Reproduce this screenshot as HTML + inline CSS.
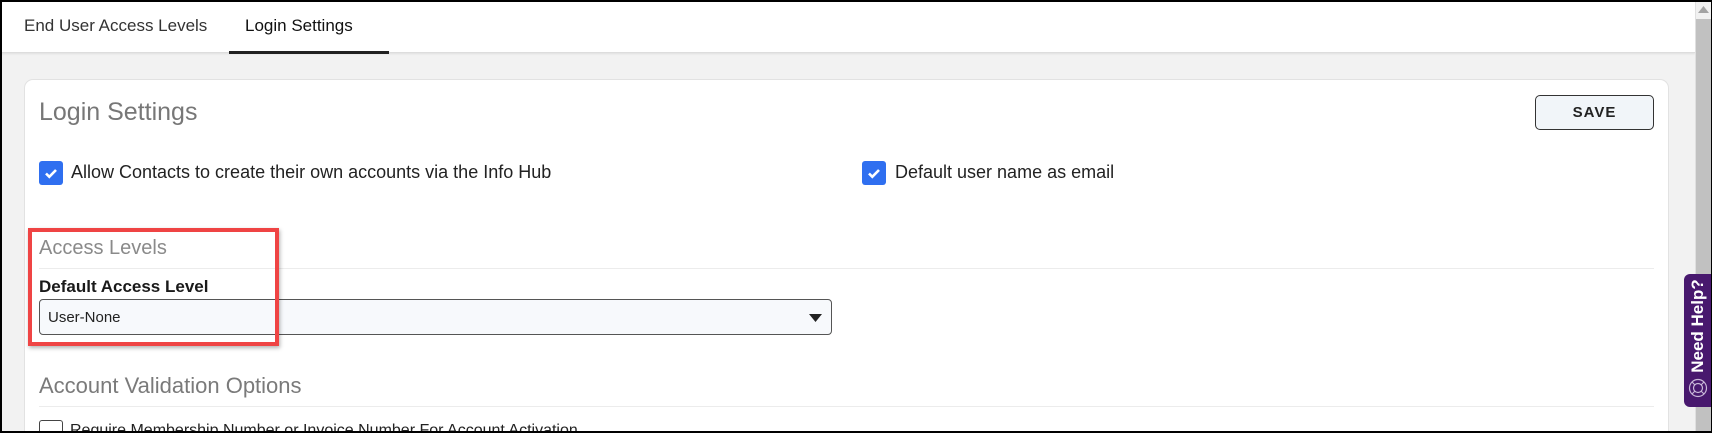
<!DOCTYPE html>
<html><head><meta charset="utf-8"><style>
*{box-sizing:border-box;margin:0;padding:0}
html,body{width:1712px;height:433px;overflow:hidden}
body{background:#f2f2f2;font-family:"Liberation Sans",sans-serif}
.wrap{position:relative;width:1712px;height:433px;overflow:hidden}
.a{position:absolute}
.frame{left:0;top:0;width:1712px;height:433px;border:2px solid #000;border-right:1px solid #000;z-index:50;pointer-events:none}
.tabs{left:0;top:0;width:1695px;height:53px;background:#fff;border-bottom:1px solid #ddd;box-shadow:0 1px 2px rgba(0,0,0,.08)}
.t{font-size:17px;color:#333;top:16px;white-space:nowrap}
.card{left:24px;top:79px;width:1645px;height:354px;background:#fff;border:1px solid #e2e2e2;border-bottom:none;border-radius:9px 9px 0 0}
.cb{width:24px;height:24px;background:#2f6ff0;border-radius:3px}
.lbl{font-size:18px;color:#222;white-space:nowrap}
.hd{color:#7a7a7a;white-space:nowrap}
.div{left:39px;width:1615px;height:1px;background:#ececec}
</style></head><body><div class="wrap">
<div class="a tabs"></div>
<div class="a t" style="left:24px">End User Access Levels</div>
<div class="a t" style="left:245px;color:#111">Login Settings</div>
<div class="a" style="left:229px;top:51px;width:160px;height:3px;background:#222"></div>

<div class="a card"></div>
<div class="a hd" style="left:39px;top:98px;font-size:25px;color:#777">Login Settings</div>
<div class="a" style="left:1535px;top:95px;width:119px;height:35px;border:1px solid #333;border-radius:5px;background:#f1f5f9;font-weight:bold;font-size:15px;letter-spacing:1px;color:#222;text-align:center;line-height:33px">SAVE</div>

<svg class="a cb" style="left:39px;top:161px" viewBox="0 0 24 24"><path d="M7 12.5l3.3 3.3L17 9" fill="none" stroke="#fff" stroke-width="2.6"/></svg>
<div class="a lbl" style="left:71px;top:162px">Allow Contacts to create their own accounts via the Info Hub</div>
<svg class="a cb" style="left:862px;top:161px" viewBox="0 0 24 24"><path d="M7 12.5l3.3 3.3L17 9" fill="none" stroke="#fff" stroke-width="2.6"/></svg>
<div class="a lbl" style="left:895px;top:162px">Default user name as email</div>

<div class="a hd" style="left:39px;top:237px;font-size:20px;color:#8a8a8a">Access Levels</div>
<div class="a div" style="top:268px"></div>
<div class="a lbl" style="left:39px;top:277px;font-weight:bold;font-size:17px;color:#1a1a1a">Default Access Level</div>
<div class="a" style="left:39px;top:299px;width:793px;height:36px;border:1px solid #555;border-radius:4px;background:#f7f9fc"></div>
<div class="a" style="left:48px;top:309px;font-size:15px;color:#222">User-None</div>
<svg class="a" style="left:809px;top:314px" width="13" height="8"><path d="M0 0h13L6.5 8z" fill="#222"/></svg>
<div class="a" style="left:28px;top:228px;width:251px;height:118px;border:4px solid #ef4444;box-shadow:1px 2px 4px rgba(0,0,0,.3)"></div>

<div class="a hd" style="left:39px;top:373px;font-size:22px;color:#7a7a7a">Account Validation Options</div>
<div class="a div" style="top:406px"></div>
<div class="a" style="left:39px;top:420px;width:24px;height:13px;border:1px solid #444;border-bottom:none;border-radius:3px 3px 0 0;background:#fff"></div>
<div class="a" style="left:70px;top:420px;height:13px;overflow:hidden;font-size:16px;color:#222;white-space:nowrap;line-height:22px">Require Membership Number or Invoice Number For Account Activation</div>

<div class="a" style="left:1695px;top:0;width:17px;height:433px;background:#f1f1f1;border-left:1px solid #e0e0e0"></div>
<div class="a" style="left:1696px;top:19px;width:15px;height:414px;background:#c1c1c1"></div>
<svg class="a" style="left:1698px;top:6px" width="11" height="7"><path d="M0 7L5.5 0 11 7z" fill="#a3a3a3"/></svg>

<div class="a" style="left:1684px;top:274px;width:28px;height:133px;background:#48186e;border-radius:6px 0 0 6px"></div>
<div class="a" style="left:1698px;top:326px;transform:translate(-50%,-50%) rotate(-90deg);color:#fff;font-weight:bold;font-size:17px;white-space:nowrap">Need Help?</div>
<svg class="a" style="left:1688px;top:378px" width="20" height="20" viewBox="0 0 20 20"><g fill="none" stroke="#c9b8d8" stroke-width="1.2"><circle cx="10" cy="10" r="8.5"/><circle cx="10" cy="10" r="4.5"/><path d="M4 4l3 3M16 4l-3 3M4 16l3-3M16 16l-3-3"/></g></svg>

<div class="a frame"></div>
</div></body></html>
